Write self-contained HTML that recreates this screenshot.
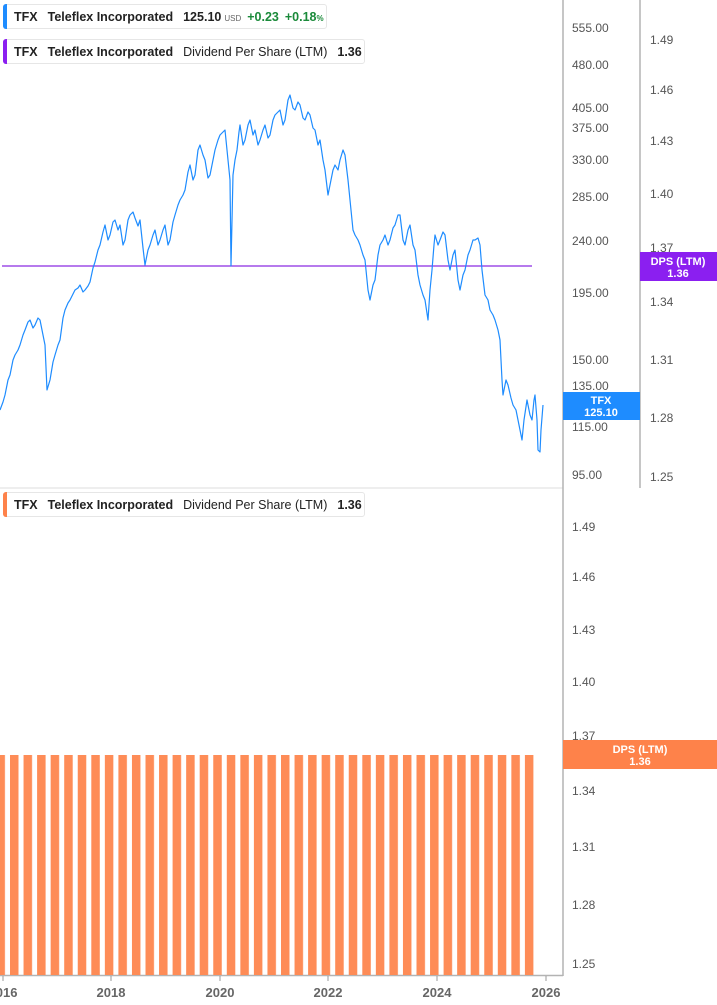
<!DOCTYPE html>
<html><head><meta charset="utf-8"><style>
html,body{margin:0;padding:0;background:#fff;width:717px;height:1005px;overflow:hidden;font-family:"Liberation Sans",sans-serif}
.lg{position:absolute;left:3px;height:25px;border:1px solid #e6e6e6;border-radius:3px;background:#fff;font-size:12.5px;font-weight:bold;color:#222;line-height:25px;white-space:nowrap;box-sizing:border-box;padding-left:10px}
.lg::before{content:"";position:absolute;left:-1px;top:-1px;bottom:-1px;width:4px;border-radius:3px 0 0 3px;background:var(--c)}
.lg span{margin-right:10px}
.n{font-weight:normal}
</style></head><body>
<svg width="717" height="1005" style="position:absolute;left:0;top:0" font-family="Liberation Sans, sans-serif">
<defs><pattern id="p" x="10" y="0" width="13.55" height="1005" patternUnits="userSpaceOnUse"><rect x="0" y="0" width="8.5" height="1005" fill="#fe8c57"/></pattern></defs>
<line x1="0" y1="488" x2="563" y2="488" stroke="#ddd"/>
<line x1="563" y1="0" x2="563" y2="976" stroke="#b3b3b3" stroke-width="1.5"/>
<line x1="640" y1="0" x2="640" y2="488" stroke="#b3b3b3" stroke-width="1.5"/>
<line x1="0" y1="975.5" x2="563" y2="975.5" stroke="#b3b3b3" stroke-width="1.5"/>
<line x1="2" y1="266" x2="532" y2="266" stroke="#8a2be2" stroke-width="1.3"/>
<polyline fill="none" stroke="#1e8cff" stroke-width="1.2" stroke-linejoin="round" points="0,410 3,402 5,395 8,380 10,375 13,360 15,355 18,350 20,345 23,335 25,330 28,322 30,320 33,328 35,325 38,318 40,320 43,335 45,345 47,390 50,380 53,362 55,355 58,345 60,340 63,318 65,310 68,303 70,300 73,294 75,290 78,288 80,285 83,292 85,290 88,286 90,282 93,268 95,262 98,250 100,245 103,232 105,225 108,240 110,235 113,222 115,220 118,230 120,225 123,245 125,240 128,220 130,215 133,212 135,218 138,226 140,220 143,248 145,265 148,250 150,245 153,235 155,230 158,245 160,240 163,230 165,225 168,245 170,240 173,222 175,215 178,205 180,200 183,195 185,190 188,172 190,165 193,180 195,175 198,150 200,145 203,155 205,160 208,178 210,175 213,160 215,150 218,140 220,135 223,132 225,130 228,160 230,180 231,266 233,175 235,160 237,150 239,132 240,125 243,145 245,140 248,125 250,120 253,135 255,130 258,145 260,140 263,130 265,125 268,138 270,135 273,120 275,115 278,112 280,110 283,125 285,120 288,100 290,95 293,108 295,110 298,102 300,105 303,118 305,120 308,112 310,115 313,128 315,130 318,145 320,140 323,160 325,170 328,195 330,185 333,170 335,165 338,170 340,160 343,150 345,155 348,180 350,200 353,230 355,235 358,240 360,245 363,255 365,260 368,290 370,300 373,285 375,280 378,255 380,245 383,240 385,235 388,245 390,240 393,228 395,225 398,215 400,215 403,240 405,245 408,230 410,225 413,245 415,250 418,275 420,285 423,295 425,300 428,320 430,290 432,270 434,245 435,235 438,245 440,240 443,232 445,235 448,260 450,270 453,255 455,250 458,280 460,290 463,275 465,270 468,255 470,250 473,240 475,240 478,238 480,245 482,270 485,295 488,300 490,310 493,315 495,320 498,330 500,340 502,380 503,395 506,380 508,385 511,398 513,405 516,410 518,420 520,430 522,440 524,420 527,400 530,415 532,420 534,400 535,395 537,420 538,450 540,452 541,430 543,405"/>
<rect x="0" y="755" width="534" height="220" fill="url(#p)"/>
<g font-size="12" fill="#555">
<text x="572" y="32">555.00</text><text x="572" y="69">480.00</text><text x="572" y="112">405.00</text><text x="572" y="132">375.00</text><text x="572" y="164">330.00</text><text x="572" y="201">285.00</text><text x="572" y="245">240.00</text><text x="572" y="297">195.00</text><text x="572" y="364">150.00</text><text x="572" y="390">135.00</text><text x="572" y="431">115.00</text><text x="572" y="479">95.00</text>
<text x="650" y="44">1.49</text><text x="650" y="94">1.46</text><text x="650" y="145">1.43</text><text x="650" y="198">1.40</text><text x="650" y="252">1.37</text><text x="650" y="306">1.34</text><text x="650" y="364">1.31</text><text x="650" y="422">1.28</text><text x="650" y="481">1.25</text>
<text x="572" y="531">1.49</text><text x="572" y="581">1.46</text><text x="572" y="634">1.43</text><text x="572" y="686">1.40</text><text x="572" y="740">1.37</text><text x="572" y="795">1.34</text><text x="572" y="851">1.31</text><text x="572" y="909">1.28</text><text x="572" y="968">1.25</text>
</g>
<g font-size="13" font-weight="bold" fill="#666" text-anchor="middle">
<text x="3" y="997">2016</text><text x="111" y="997">2018</text><text x="220" y="997">2020</text><text x="328" y="997">2022</text><text x="437" y="997">2024</text><text x="546" y="997">2026</text>
</g>
<g stroke="#999"><line x1="3" y1="976" x2="3" y2="981"/><line x1="111" y1="976" x2="111" y2="981"/><line x1="220" y1="976" x2="220" y2="981"/><line x1="328" y1="976" x2="328" y2="981"/><line x1="437" y1="976" x2="437" y2="981"/><line x1="546" y1="976" x2="546" y2="981"/></g>
<rect x="563" y="392" width="77" height="28" fill="#1e8cff"/>
<text x="601" y="404" font-size="11" font-weight="bold" fill="#fff" text-anchor="middle">TFX</text>
<text x="601" y="416" font-size="11" font-weight="bold" fill="#fff" text-anchor="middle">125.10</text>
<rect x="640" y="252" width="77" height="29" fill="#8b1ff0"/>
<text x="678" y="265" font-size="11" font-weight="bold" fill="#fff" text-anchor="middle">DPS (LTM)</text>
<text x="678" y="277" font-size="11" font-weight="bold" fill="#fff" text-anchor="middle">1.36</text>
<rect x="563" y="740" width="154" height="29" fill="#fe824a"/>
<text x="640" y="753" font-size="11" font-weight="bold" fill="#fff" text-anchor="middle">DPS (LTM)</text>
<text x="640" y="765" font-size="11" font-weight="bold" fill="#fff" text-anchor="middle">1.36</text>
</svg>
<div class="lg" style="top:4px;width:324px;--c:#1e8cff"><span>TFX</span><span>Teleflex Incorporated</span><span style="margin-right:3px">125.10</span><span style="font-size:8px;color:#666;font-weight:normal;margin-right:6px">USD</span><span style="color:#1a8a3a;margin-right:6px">+0.23</span><span style="color:#1a8a3a">+0.18<small style="font-size:8px">%</small></span></div>
<div class="lg" style="top:39px;width:362px;--c:#8b1ff0"><span>TFX</span><span>Teleflex Incorporated</span><span class="n">Dividend Per Share (LTM)</span><span>1.36</span></div>
<div class="lg" style="top:492px;width:362px;--c:#fe824a"><span>TFX</span><span>Teleflex Incorporated</span><span class="n">Dividend Per Share (LTM)</span><span>1.36</span></div>
</body></html>
